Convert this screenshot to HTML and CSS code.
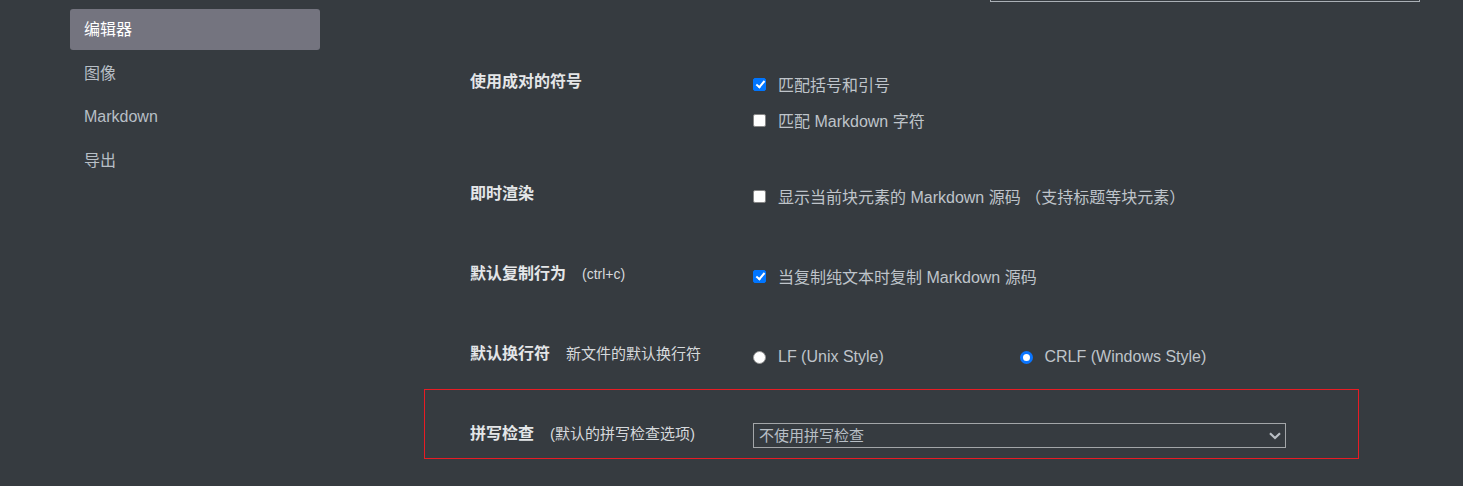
FILE: index.html
```html
<!DOCTYPE html>
<html lang="zh-CN">
<head>
<meta charset="utf-8">
<title>偏好设置 - 编辑器</title>
<link rel="stylesheet" href="styles.css">
</head>
<body>
<div class="app">
  <nav class="sidebar">
    <div class="nav-item active">编辑器</div>
    <div class="nav-item">图像</div>
    <div class="nav-item">Markdown</div>
    <div class="nav-item">导出</div>
  </nav>
  <main class="main">
    <div class="topbar"><div class="search"></div></div>
    <div class="content">
      <section class="row row-tall">
        <div class="label"><span class="title">使用成对的符号</span></div>
        <div class="options">
          <label class="opt stacked"><input class="check" type="checkbox" checked><span>匹配括号和引号</span></label>
          <label class="opt"><input class="check" type="checkbox"><span>匹配 Markdown 字符</span></label>
        </div>
      </section>
      <section class="row">
        <div class="label"><span class="title">即时渲染</span></div>
        <div class="options">
          <label class="opt"><input class="check" type="checkbox"><span>显示当前块元素的 Markdown 源码 （支持标题等块元素）</span></label>
        </div>
      </section>
      <section class="row">
        <div class="label"><span class="title">默认复制行为</span><span class="hint hint-sm">(ctrl+c)</span></div>
        <div class="options">
          <label class="opt"><input class="check" type="checkbox" checked><span>当复制纯文本时复制 Markdown 源码</span></label>
        </div>
      </section>
      <section class="row row-short">
        <div class="label"><span class="title">默认换行符</span><span class="hint">新文件的默认换行符</span></div>
        <div class="options radios">
          <label class="opt"><input class="radio" type="radio" name="eol"><span>LF (Unix Style)</span></label>
          <label class="opt"><input class="radio" type="radio" name="eol" checked><span>CRLF (Windows Style)</span></label>
        </div>
      </section>
      <section class="row row-focus">
        <div class="label"><span class="title">拼写检查</span><span class="hint">(默认的拼写检查选项)</span></div>
        <div class="select-wrap">
          <select class="select"><option>不使用拼写检查</option></select>
          <svg class="chevron" width="12" height="8" viewBox="0 0 12 8"><polyline points="1,1.2 6,6 11,1.2" fill="none" stroke="#b9bec4" stroke-width="2.2"/></svg>
        </div>
      </section>
    </div>
  </main>
</div>
</body>
</html>
```

FILE: styles.css
```css
html, body {
  margin: 0;
  padding: 0;
}
body {
  background: #363b40;
  width: 1463px;
  height: 486px;
  overflow: hidden;
  font-family: "Liberation Sans", "Noto Sans CJK SC", sans-serif;
  color: #b8bfc6;
}
.app {
  display: flex;
  align-items: flex-start;
}
.sidebar {
  width: 250px;
  padding: 9px 0 0 70px;
  display: flex;
  flex-direction: column;
  gap: 2.5px;
}
.nav-item {
  height: 41px;
  line-height: 41px;
  padding-left: 14px;
  font-size: 16px;
  color: #b8bfc6;
  border-radius: 3px;
}
.nav-item.active {
  background: #74747f;
  color: #ffffff;
}
.main {
  flex: 1;
}
.topbar {
  display: flex;
  justify-content: flex-end;
  padding-right: 43px;
}
.search {
  width: 428px;
  height: 20px;
  margin-top: -20px;
  border: 1px solid #aab0b6;
}
.content {
  margin-left: 104px;
  width: 935px;
  margin-top: 59px;
}
.row {
  display: flex;
  align-items: flex-start;
  box-sizing: border-box;
  height: 80px;
  padding: 10px 0 0 46px;
}
.row-tall {
  height: 112px;
}
.row-short {
  height: 56px;
}
.label {
  width: 283px;
  flex: none;
  display: flex;
  align-items: baseline;
  gap: 16px;
  line-height: 22px;
}
.title {
  font-size: 16px;
  font-weight: bold;
  color: #e4e6e8;
}
.hint {
  font-size: 15px;
  color: #d6d9dc;
}
.hint-sm {
  font-size: 14px;
}
.options {
  width: 533px;
  padding-top: 2px;
  display: flex;
  flex-direction: column;
}
.options.radios {
  flex-direction: row;
  padding-top: 3px;
}
.options.radios .opt {
  width: 50%;
}
.opt {
  display: flex;
  align-items: center;
  gap: 12px;
  height: 22px;
  font-size: 16px;
  color: #bfc4ca;
  white-space: nowrap;
}
.opt.stacked {
  margin-bottom: 14px;
}
.check,
.radio {
  -webkit-appearance: none;
  appearance: none;
  position: relative;
  margin: 0;
  width: 13px;
  height: 13px;
  flex: none;
  box-sizing: border-box;
  background: #ffffff;
  border: 1px solid #858585;
}
.check {
  border-radius: 2px;
}
.check:checked {
  background: #0075ff;
  border-color: #0075ff;
}
.check:checked::after {
  content: "";
  position: absolute;
  left: 3.5px;
  top: 0.5px;
  width: 3px;
  height: 7px;
  border-right: 2px solid #ffffff;
  border-bottom: 2px solid #ffffff;
  transform: rotate(40deg);
}
.radio {
  border-radius: 50%;
  border-color: #9a9a9a;
}
.radio:checked {
  border: 3px solid #0a75ff;
  background: #ffffff;
}
.row-focus {
  height: auto;
  border: 1px solid #e81c24;
  padding: 33px 0 10px 45px;
}
.select-wrap {
  position: relative;
  width: 533px;
}
.select {
  appearance: none;
  -webkit-appearance: none;
  display: block;
  width: 100%;
  height: 25px;
  margin: 0;
  padding: 0 0 0 5px;
  border: 1px solid #a3a6a9;
  border-radius: 0;
  background: transparent;
  color: #b8bfc6;
  font-family: "Liberation Sans", "Noto Sans CJK SC", sans-serif;
  font-size: 15px;
  outline: none;
}
.chevron {
  position: absolute;
  right: 5px;
  top: 9px;
  pointer-events: none;
}
```
